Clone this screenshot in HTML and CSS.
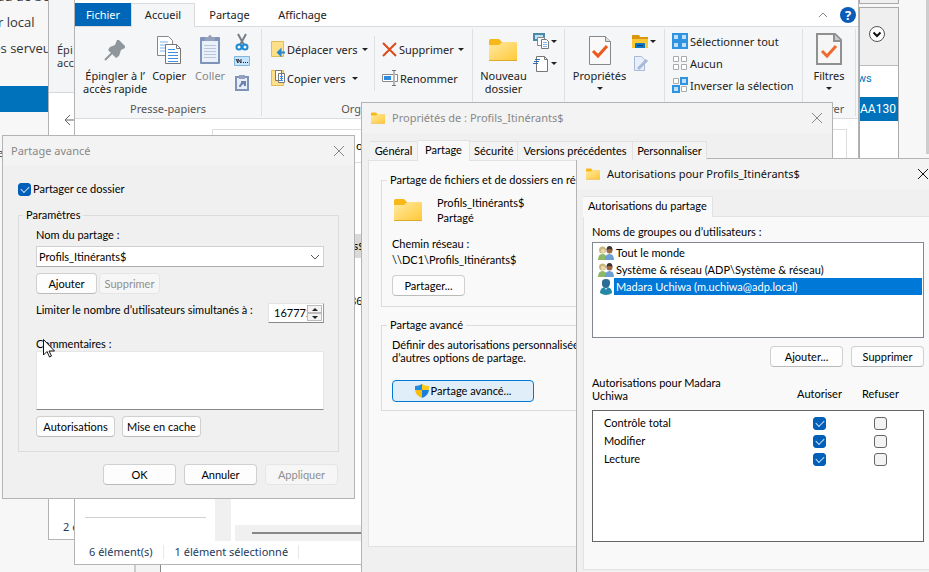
FILE: index.html
```html
<!DOCTYPE html>
<html lang="fr">

<head>
    <meta charset="UTF-8">
    <meta name="viewport" content="width=device-width, initial-scale=1.0">
    <title>Profils_Itinérants$ - Partage avancé</title>
    <link rel="stylesheet" href="styles.css">
</head>

<body>
    <!-- shared icons -->
    <svg class="defs" width="0" height="0">
        <defs>
            <linearGradient id="gold" x1="0" y1="0" x2="1" y2="1">
                <stop offset="0" stop-color="#ffe9a2" />
                <stop offset="1" stop-color="#ffc937" />
            </linearGradient>
            <symbol id="folder" viewBox="0 0 28 22">
                <path d="M0 1.500 Q0 0 1.500 0H10l3 3H27v5H0z" fill="#f9b81a" />
                <path d="M0 6h10l3-3h14q1 0 1 1v17q0 1-1 1H1q-1 0-1-1z" fill="url(#gold)" />
                <path d="M0 21.500h28" stroke="#e0a92c" />
            </symbol>
            <symbol id="close" viewBox="0 0 12 12">
                <path d="M1 1l10 10M11 1L1 11" fill="none" stroke="currentColor" />
            </symbol>
            <symbol id="group" viewBox="0 0 16 14">
                <path d="M0 14q0-6 4.500-6T9 14z" fill="#8db868" />
                <circle cx="4.500" cy="4" r="3.500" fill="#c9b877" />
                <circle cx="5" cy="5" r="2" fill="#efd9b5" />
                <path d="M7 14q0-6 4.500-6T16 14z" fill="#6c9fd6" />
                <circle cx="11.500" cy="4.500" r="3" fill="#9c6b43" />
                <path d="M8.500 4q0-4 3-4t3 4q-3-2-6 0z" fill="#3d3531" />
            </symbol>
            <symbol id="user" viewBox="0 0 14 16">
                <path d="M1 14q0-6 6-6t6 6q-6 4-12 0z" fill="#2587a8" />
                <path d="M5 8l2 3 2-3z" fill="#bfe0ea" />
                <path d="M3 3q0-3 4-3t4 3v2q-1 4-4 4T3 6z" fill="#2c6c95" />
            </symbol>
        </defs>
    </svg>

    <div class="desktop">

        <!-- server manager, mostly covered -->
        <aside class="manager">
            <p>eau de bord</p>
            <p>ur local</p>
            <p>les serveurs</p>
            <p class="active"></p>
            <p class="role">e</p>
        </aside>
        <div class="rail">
            <div class="rail-top"></div>
            <div class="rail-box">
                <div class="rail-head">
                    <svg width="16" height="16" viewBox="0 0 16 16">
                        <circle cx="8" cy="8" r="7.500" fill="#fff" stroke="#555" />
                        <path d="M4.500 6.500L8 10l3.500-3.500" fill="none" stroke="#111" stroke-width="2" />
                    </svg>
                </div>
                <p class="rail-task">ews</p>
                <p class="rail-server">AA130 (1)</p>
            </div>
        </div>
        <div class="scroll"></div>
        <div class="lower"></div>
        <div class="lower front"></div>

        <!-- explorer behind -->
        <div class="window explorer-back">
            <div class="back-ribbon">
                <p>Épi<br>accè</p>
            </div>
            <svg class="back-arrow" width="14" height="12" viewBox="0 0 14 12">
                <path d="M14 6H1M6 1L1 6l5 5" fill="none" stroke="#666" />
            </svg>
            <p class="back-status">2 é</p>
        </div>

        <!-- explorer -->
        <div class="window explorer">
            <div class="menu">
                <button class="file">Fichier</button>
                <button class="current">Accueil</button>
                <button>Partage</button>
                <button>Affichage</button>
                <span class="menu-end">
                    <svg width="10" height="6" viewBox="0 0 10 6">
                        <path d="M1 5l4-4 4 4" fill="none" stroke="#888" />
                    </svg>
                    <span class="help">?</span>
                </span>
            </div>
            <div class="ribbon">
                <div class="group clipboard">
                    <div class="tools">
                        <button class="big pin">
                            <svg width="22" height="32" viewBox="0 0 22 32">
                                <path d="M13 7h2l6 6v2l-4 2-2 6-3 2-8-8 2-3 5-2z" fill="#8f979d" />
                                <path d="M8 20L1 27" stroke="#8f979d" stroke-width="2" />
                            </svg>
                            Épingler à l’<br>accès rapide
                        </button>
                        <button class="big copy">
                            <svg width="26" height="32" viewBox="0 0 26 32">
                                <path d="M1.500 3.500h11l4 4v15h-15z" fill="#fff" stroke="#888" />
                                <path d="M4 9h8M4 12h9M4 15h9M4 18h9" stroke="#7fb2ea" />
                                <path d="M9.500 11.500h11l4 4v15h-15z" fill="#fff" stroke="#777" />
                                <path d="M20.500 11.500v4h4" fill="none" stroke="#777" />
                                <path d="M12 16.500h7M12 19.500h10M12 22.500h10M12 25.500h10M12 28.500h10" stroke="#3d8fe8" />
                            </svg>
                            Copier
                        </button>
                        <button class="big paste" disabled>
                            <svg width="22" height="32" viewBox="0 0 22 32">
                                <rect x="1" y="4" width="20" height="27" rx="1" fill="#8093b8" />
                                <path d="M3 8h16v21H3z" fill="#eaf0f9" />
                                <path d="M5 12.500h12M5 15.500h12M5 18.500h12M5 21.500h12M5 24.500h12" stroke="#b8c5dc" />
                                <path d="M6 8V4h3q2-4 4 0h3v4z" fill="#94a2bb" />
                            </svg>
                            Coller
                        </button>
                        <div class="minis">
                            <svg width="14" height="18" viewBox="0 0 14 18">
                                <path d="M3 1l6 11M11 1L5 12" stroke="#777e86" stroke-width="2" />
                                <circle cx="4" cy="14" r="2.500" fill="none" stroke="#1c8ad6" stroke-width="2" />
                                <circle cx="10" cy="14" r="2.500" fill="none" stroke="#1c8ad6" stroke-width="2" />
                            </svg>
                            <svg width="16" height="10" viewBox="0 0 16 10">
                                <path d="M.5.5h15v9H.5z" fill="#c7e4fa" stroke="#7fb6e0" />
                                <path d="M2 3l2 4V3l3 4V3M9 6.500h1M11 6.500h1M13 6.500h1" fill="none" stroke="#223" />
                            </svg>
                            <svg width="14" height="16" viewBox="0 0 14 16">
                                <rect x="1" y="2" width="12" height="13" fill="#e8eef8" stroke="#8093b8" stroke-width="2" />
                                <path d="M4 0h6v4H4z" fill="#94a2bb" />
                                <path d="M5 12q0-3 4-4M6 7h4v4" fill="none" stroke="#6f84ad" stroke-width="2" />
                            </svg>
                        </div>
                    </div>
                    <h2>Presse-papiers</h2>
                </div>

                <div class="group organise">
                    <div class="tools">
                        <div class="list">
                            <button>
                                <svg width="14" height="16" viewBox="0 0 14 16">
                                    <path d="M.5.5h12v15H.5z" fill="#ffe08a" stroke="#e3bc55" />
                                    <path d="M14 11.500H8M9.500 9L7 11.500 9.500 14z" fill="#2488d8" stroke="#2488d8" stroke-width="2" />
                                </svg>
                                Déplacer vers <i class="caret"></i>
                            </button>
                            <button>
                                <svg width="14" height="16" viewBox="0 0 14 16">
                                    <path d="M.5.5h12v15H.5z" fill="#ffe08a" stroke="#e3bc55" />
                                    <path d="M4.500.5h6v10h-6zM7.500 3.500h6v9h-6z" fill="#fff" stroke="#777" />
                                    <path d="M9 6.500h3M9 8.500h3M9 10.500h3" stroke="#3d8fe8" />
                                </svg>
                                Copier vers <i class="caret wide"></i>
                            </button>
                        </div>
                        <div class="list second">
                            <button>
                                <svg width="15" height="16" viewBox="0 0 15 16">
                                    <path d="M1 2l13 13M14 2L1 15" stroke="#dc4a1c" stroke-width="2" />
                                </svg>
                                Supprimer <i class="caret"></i>
                            </button>
                            <button>
                                <svg width="16" height="16" viewBox="0 0 16 16">
                                    <path d="M11 4.500H.5v7H11M13 4.500h2.500v7H13" fill="#fff" stroke="#888" />
                                    <path d="M2 6h7v4H2z" fill="#2d8ce0" />
                                    <path d="M12 1v14M10 .5h4M10 15.500h4" stroke="#777" />
                                </svg>
                                Renommer
                            </button>
                        </div>
                    </div>
                    <h2>Organiser</h2>
                </div>

                <div class="group new">
                    <div class="tools">
                        <button class="big">
                            <svg width="28" height="32" viewBox="0 0 28 32">
                                <use href="#folder" x="0" y="6" width="28" height="22" />
                            </svg>
                            Nouveau<br>dossier
                        </button>
                        <div class="minis">
                            <span class="mini">
                                <svg width="17" height="17" viewBox="0 0 17 17">
                                    <path d="M1 1h10v6H1z" fill="#bfe3f5" stroke="#4a8aa8" stroke-width="2" />
                                    <path d="M4.500 4.500h7v8h-7z" fill="#fff" stroke="#888" />
                                    <path d="M8.500 6.500h5l2 2v7h-7z" fill="#fff" stroke="#777" />
                                    <path d="M10 9.500h4M10 11.500h4M10 13.500h4" stroke="#8fb7e8" />
                                </svg>
                                <i class="caret"></i>
                            </span>
                            <span class="mini">
                                <svg width="17" height="17" viewBox="0 0 17 17">
                                    <path d="M3.500 1.500h8l3 3v12h-11z" fill="#fff" stroke="#777" />
                                    <path d="M11.500 1.500v3h3" fill="none" stroke="#777" />
                                    <path d="M2 4.500h5M1 6.500h5M0 8.500h5" stroke="#2d6db5" />
                                </svg>
                                <i class="caret"></i>
                            </span>
                        </div>
                    </div>
                </div>

                <div class="group open">
                    <div class="tools">
                        <button class="big">
                            <svg width="22" height="32" viewBox="0 0 22 32">
                                <path d="M.5 3.500h16l5 5v23H.5z" fill="#f9f9f9" stroke="#888" />
                                <path d="M16.500 3.500v5h5" fill="#ddd" stroke="#888" />
                                <path d="M4 18l5 5 9-10" fill="none" stroke="#f0581b" stroke-width="3" />
                            </svg>
                            Propriétés
                            <i class="caret"></i>
                        </button>
                        <div class="minis">
                            <span class="mini">
                                <svg width="17" height="17" viewBox="0 0 17 17">
                                    <path d="M0 2h7l1 2h8v11H0z" fill="#fcc935" />
                                    <path d="M0 2h7l1 2h8v2H0z" fill="#d9970f" />
                                    <path d="M3 11q0-1 1-1h8q1 0 1 1v4H3z" fill="#0b76c4" />
                                    <path d="M5 12.500h6" stroke="#063f70" />
                                </svg>
                                <i class="caret"></i>
                            </span>
                            <span class="mini">
                                <svg width="17" height="17" viewBox="0 0 17 17">
                                    <path d="M2.500 1.500h7l3 3v11h-10z" fill="#e9effa" stroke="#a9b9d8" />
                                    <path d="M15 5L6 14" stroke="#a9b9d8" stroke-width="3" />
                                </svg>
                            </span>
                        </div>
                    </div>
                </div>

                <div class="group select">
                    <div class="tools">
                        <div class="list tight">
                            <button>
                                <svg width="16" height="16" viewBox="0 0 16 16">
                                    <path d="M1 1h6v6H1zM9 1h6v6H9zM1 9h6v6H1zM9 9h6v6H9z" fill="#bfe0fb" stroke="#2f93e0" stroke-width="2" />
                                </svg>
                                Sélectionner tout
                            </button>
                            <button>
                                <svg width="16" height="16" viewBox="0 0 16 16">
                                    <path d="M1.500 1.500h5v5h-5zM9.500 1.500h5v5h-5zM1.500 9.500h5v5h-5zM9.500 9.500h5v5h-5z" fill="#fff" stroke="#aaa" />
                                </svg>
                                Aucun
                            </button>
                            <button>
                                <svg width="16" height="16" viewBox="0 0 16 16">
                                    <path d="M1.500 1.500h5v5h-5zM9.500 9.500h5v5h-5z" fill="#fff" stroke="#aaa" />
                                    <path d="M9 1h6v6H9zM1 9h6v6H1z" fill="#bfe0fb" stroke="#2f93e0" stroke-width="2" />
                                </svg>
                                Inverser la sélection
                            </button>
                        </div>
                    </div>
                </div>

                <div class="group filter">
                    <div class="tools">
                        <button class="big">
                            <svg width="26" height="32" viewBox="0 0 26 32">
                                <path d="M1 1h18l6 6v24H1z" fill="#f6f6f6" stroke="#909090" stroke-width="2" />
                                <path d="M18 1v7h7" fill="#ccc" stroke="#909090" stroke-width="2" />
                                <path d="M6 18l5 5 9-10" fill="none" stroke="#ee6a30" stroke-width="3" />
                            </svg>
                            Filtres
                            <i class="caret"></i>
                        </button>
                    </div>
                    <h2>Filtrer</h2>
                </div>
            </div>

            <div class="search">o</div>
            <div class="explorer-body">
                <div class="tree"></div>
                <div class="files">
                    <p class="row picked">Profils_Itinérants$</p>
                    <p class="row date">86</p>
                    <div class="hscroll"></div>
                </div>
            </div>
            <div class="status">
                <span>6 élément(s)</span>
                <span>1 élément sélectionné</span>
            </div>
        </div>

        <!-- folder properties -->
        <div class="window properties">
            <div class="titlebar">
                <svg width="14" height="12"><use href="#folder" width="14" height="12" /></svg>
                <h1>Propriétés de : Profils_Itinérants$</h1>
                <button class="x" aria-label="Fermer"><svg width="12" height="12"><use href="#close" /></svg></button>
            </div>
            <div class="tabs">
                <button>Général</button>
                <button class="current">Partage</button>
                <button>Sécurité</button>
                <button>Versions précédentes</button>
                <button>Personnaliser</button>
            </div>
            <div class="panel">
                <fieldset class="share">
                    <legend>Partage de fichiers et de dossiers en réseau</legend>
                    <div class="shared">
                        <svg width="28" height="22"><use href="#folder" /></svg>
                        <p>Profils_Itinérants$<br>Partagé</p>
                    </div>
                    <p class="path">Chemin réseau :<br>\\DC1\Profils_Itinérants$</p>
                    <button class="btn">Partager...</button>
                </fieldset>
                <fieldset class="advanced">
                    <legend>Partage avancé</legend>
                    <p>Définir des autorisations personnalisées<br>d’autres options de partage.</p>
                    <button class="btn focus">
                        <svg width="14" height="14" viewBox="0 0 14 14">
                            <path d="M7 0Q4 2 0 2v4h7z" fill="#1f8be0" />
                            <path d="M7 0q3 2 7 2v4H7z" fill="#fccb1d" />
                            <path d="M0 6h7v8Q1 12 0 6z" fill="#f9bd12" />
                            <path d="M14 6H7v8q6-2 7-8z" fill="#1a7fd6" />
                        </svg>
                        Partage avancé...
                    </button>
                </fieldset>
            </div>
        </div>

        <!-- advanced sharing -->
        <div class="window sharing">
            <div class="titlebar">
                <h1>Partage avancé</h1>
                <button class="x" aria-label="Fermer"><svg width="12" height="12"><use href="#close" /></svg></button>
            </div>
            <form class="sharing-body">
                <label class="check"><input type="checkbox" checked>Partager ce dossier</label>
                <fieldset>
                    <legend>Paramètres</legend>
                    <label for="name">Nom du partage :</label>
                    <div class="select-box">
                        <select id="name">
                            <option>Profils_Itinérants$</option>
                        </select>
                        <svg width="10" height="6" viewBox="0 0 10 6">
                            <path d="M1 1l4 4 4-4" fill="none" stroke="#555" />
                        </svg>
                    </div>
                    <div class="buttons">
                        <button type="button" class="btn">Ajouter</button>
                        <button type="button" class="btn" disabled>Supprimer</button>
                    </div>
                    <div class="limit">
                        <label for="limit">Limiter le nombre d’utilisateurs simultanés à :</label>
                        <span class="spinner">
                            <input id="limit" type="text" value="16777216">
                            <span class="arrows">
                                <button type="button" aria-label="Plus"><i class="caret up"></i></button>
                                <button type="button" aria-label="Moins"><i class="caret"></i></button>
                            </span>
                        </span>
                    </div>
                    <label for="comment">Commentaires :</label>
                    <textarea id="comment"></textarea>
                    <div class="buttons bottom">
                        <button type="button" class="btn">Autorisations</button>
                        <button type="button" class="btn">Mise en cache</button>
                    </div>
                </fieldset>
                <div class="footer">
                    <button type="button" class="btn">OK</button>
                    <button type="button" class="btn">Annuler</button>
                    <button type="button" class="btn" disabled>Appliquer</button>
                </div>
            </form>
        </div>

        <!-- share permissions -->
        <div class="window permissions">
            <div class="titlebar">
                <svg width="14" height="12"><use href="#folder" width="14" height="12" /></svg>
                <h1>Autorisations pour Profils_Itinérants$</h1>
                <button class="x" aria-label="Fermer"><svg width="12" height="12"><use href="#close" /></svg></button>
            </div>
            <div class="tabs">
                <button class="current">Autorisations du partage</button>
            </div>
            <div class="panel">
                <p>Noms de groupes ou d’utilisateurs :</p>
                <ul class="names">
                    <li><svg width="16" height="14"><use href="#group" /></svg><span>Tout le monde</span></li>
                    <li><svg width="16" height="14"><use href="#group" /></svg><span>Système &amp; réseau (ADP\Système &amp; réseau)</span></li>
                    <li class="selected"><svg width="16" height="16"><use href="#user" /></svg><span>Madara Uchiwa (m.uchiwa@adp.local)</span></li>
                </ul>
                <div class="buttons">
                    <button class="btn">Ajouter...</button>
                    <button class="btn">Supprimer</button>
                </div>
                <table>
                    <thead>
                        <tr>
                            <th class="who">Autorisations pour Madara<br>Uchiwa</th>
                            <th>Autoriser</th>
                            <th>Refuser</th>
                            <th class="edge"></th>
                        </tr>
                    </thead>
                    <tbody>
                        <tr class="gap">
                            <td colspan="4"></td>
                        </tr>
                        <tr>
                            <td>Contrôle total</td>
                            <td><input type="checkbox" aria-label="Autoriser contrôle total" checked></td>
                            <td><input type="checkbox" aria-label="Refuser contrôle total"></td>
                            <td></td>
                        </tr>
                        <tr>
                            <td>Modifier</td>
                            <td><input type="checkbox" aria-label="Autoriser modifier" checked></td>
                            <td><input type="checkbox" aria-label="Refuser modifier"></td>
                            <td></td>
                        </tr>
                        <tr>
                            <td>Lecture</td>
                            <td><input type="checkbox" aria-label="Autoriser lecture" checked></td>
                            <td><input type="checkbox" aria-label="Refuser lecture"></td>
                            <td></td>
                        </tr>
                        <tr class="rest">
                            <td colspan="4"></td>
                        </tr>
                    </tbody>
                </table>
            </div>
        </div>

        <svg class="cursor" width="12" height="19" viewBox="0 0 12 19">
            <path d="M.5.5v15.500l3.500-3.500 2.500 5.500 2-1-2.500-5h5.500z" fill="#fff" stroke="#111" />
        </svg>
    </div>
</body>

</html>
```

FILE: styles.css
```css
* {
    margin: 0;
    padding: 0;
    box-sizing: border-box;
}

body {
    font-family: Lato, "Liberation Sans", sans-serif;
    font-size: 11px;
    line-height: 14px;
    color: #000;
}

button, input, select, textarea {
    font: inherit;
    color: inherit;
}

h1, h2 {
    font-weight: normal;
}

svg {
    flex: none;
}

.defs {
    position: absolute;
}

.desktop {
    position: relative;
    min-height: 100vh;
    overflow: hidden;
    background-color: #f7f7f7;
    white-space: nowrap;
}

.window {
    position: absolute;
    display: flex;
    flex-direction: column;
    border: 1px solid #b4b4b4;
    background-color: #f0f0f0;
}

/* server manager */

.manager {
    position: absolute;
    top: -17px;
    left: -10px;
    width: 60px;
    overflow: hidden;
    font-family: "Open Sans", sans-serif;
    font-size: 13px;
    line-height: 26px;
    color: #333;
}

.manager p {
    height: 26px;
}

.manager .active {
    margin-top: 25px;
    background-color: #0072bc;
}

.manager .role {
    margin-top: 28px;
    padding-left: 7px;
    font-size: 11px;
}

.rail {
    position: absolute;
    top: 0;
    left: 859px;
    width: 40px;
    font-family: Roboto, sans-serif;
}

.rail-top {
    height: 4px;
    border: 1px solid #aaa;
    border-top: 0;
    background-color: #efefef;
}

.rail-box {
    height: 180px;
    margin-top: 3px;
    overflow: hidden;
    border: 1px solid #aaa;
    background-color: #fff;
}

.rail-head {
    height: 58px;
    padding: 18px 9px;
    border-bottom: 1px solid #bbb;
    background-color: #efefef;
}

.rail-task {
    padding-top: 6px;
    margin-left: -8px;
    color: #0072bc;
}

.rail-server {
    height: 24px;
    margin-top: 11px;
    font-size: 12px;
    line-height: 24px;
    color: #fff;
    background-color: #0072bc;
}

.scroll {
    position: absolute;
    top: 0;
    right: 0;
    width: 3px;
    height: 154px;
    background-color: #cdcdcd;
}

.lower {
    position: absolute;
    top: 560px;
    right: 0;
    bottom: 0;
    left: 134px;
    border-left: 2px solid #ccc;
    background-color: #f3f3f3;
}

.lower.front {
    left: 160px;
    border-left: 1px solid #888;
    background-color: #fff;
}

/* explorer windows */

.explorer-back {
    top: -1px;
    left: 48px;
    width: 60px;
    height: 541px;
    background-color: #fff;
    font-family: "Noto Sans", sans-serif;
    color: #333;
}

.back-ribbon {
    height: 93px;
    padding: 43px 8px 0;
    overflow: hidden;
    line-height: 13px;
    border-bottom: 1px solid #d8d8d8;
    background-color: #f4f5f7;
}

.back-arrow {
    margin: 21px 0 0 15px;
}

.back-status {
    margin: auto 0 5px 14px;
    color: #1e395b;
}

.explorer {
    top: -1px;
    left: 74px;
    width: 785px;
    height: 566px;
    background-color: #fff;
    font-family: "Noto Sans", sans-serif;
}

.explorer button {
    border: 0;
    background: none;
}

.menu {
    display: flex;
    height: 27px;
    padding-top: 3px;
    border-bottom: 1px solid #dadbdc;
    color: #222;
}

.menu button {
    width: 69px;
}

.menu .file {
    width: 56px;
    color: #fff;
    background-color: #0067b8;
}

.menu .current {
    position: relative;
    width: 64px;
    height: 24px;
    padding-bottom: 2px;
    border: 1px solid #dadbdc;
    border-bottom: 0;
    background-color: #f5f6f7;
}

.menu button:nth-child(4) {
    width: 77px;
}

.menu-end {
    display: flex;
    gap: 12px;
    align-items: center;
    margin-left: auto;
    padding-right: 2px;
}

.help {
    width: 16px;
    height: 16px;
    border-radius: 50%;
    font-size: 13px;
    font-weight: bold;
    line-height: 16px;
    text-align: center;
    color: #fff;
    background-color: #0a5cb8;
}

.ribbon {
    display: flex;
    flex: none;
    height: 92px;
    border-bottom: 1px solid #dadbdc;
    background-color: #f5f6f7;
    line-height: 13px;
    color: #222;
}

.group {
    display: flex;
    flex-direction: column;
    margin: 2px 0;
    border-right: 1px solid #dfe0e2;
}

.group h2 {
    margin-top: auto;
    font-size: 11px;
    line-height: 14px;
    text-align: center;
    color: #555;
}

.tools {
    display: flex;
    justify-content: center;
    padding-top: 4px;
}

.big {
    display: flex;
    flex-direction: column;
    align-items: center;
    line-height: 13px;
    text-align: center;
}

.big svg {
    margin-bottom: 4px;
}

.big .caret {
    margin-top: 5px;
}

.explorer .paste {
    margin-left: 4px;
    color: #888;
}

.caret {
    display: inline-block;
    border: 3px solid transparent;
    border-top-color: #222;
    border-bottom: 0;
}

.caret.up {
    border-top: 0;
    border-bottom: 3px solid #222;
}

.minis {
    display: flex;
    flex-direction: column;
    gap: 5px;
    align-items: center;
}

.mini {
    display: flex;
    gap: 1px;
    align-items: center;
    width: 24px;
}

.clipboard {
    width: 187px;
}

.clipboard .tools {
    gap: 5px;
    justify-content: flex-start;
    padding-left: 8px;
}

.clipboard .minis {
    margin-left: 4px;
}

.clipboard .minis svg:nth-child(3) {
    margin-top: 4px;
}

.organise {
    width: 211px;
}

.organise .tools {
    justify-content: flex-start;
    padding-top: 7px;
}

.list {
    display: flex;
    flex-direction: column;
    gap: 11px;
    padding: 4px 9px;
}

.list button {
    display: flex;
    gap: 2px;
    align-items: center;
    height: 18px;
}

.list .caret {
    margin-left: 2px;
}

.list .wide {
    margin-left: 5px;
}

.list:first-child {
    width: 112px;
}

.second {
    padding-left: 7px;
    border-left: 1px solid #dfe0e2;
}

.new {
    width: 92px;
}

.new .tools, .open .tools {
    gap: 6px;
}

.open {
    width: 100px;
}

.select {
    width: 138px;
}

.select .tools {
    justify-content: flex-start;
    padding-top: 3px;
}

.list.tight {
    gap: 4px;
    width: 137px;
    padding: 0 7px;
}

.filter {
    width: 53px;
}

.search {
    flex: none;
    height: 34px;
    margin: 10px 11px 0 137px;
    padding-left: 143px;
    border: 1px solid #ddd;
    line-height: 32px;
}

.explorer-body {
    display: flex;
    flex: 1;
    min-height: 0;
}

.tree {
    width: 121px;
    margin: 0 0 23px 10px;
    border-bottom: 1px solid #d0d0d0;
}

.files {
    display: flex;
    flex: 1;
    flex-direction: column;
    margin-left: 9px;
    border-left: 16px solid #f0f0f0;
    padding-left: 4px;
}

.row {
    height: 24px;
    padding-left: 36px;
    line-height: 24px;
    margin-top: 31px;
}

.row.picked {
    margin-top: 71px;
    background-color: #d9d9d9;
}

.date {
    padding-left: 115px;
}

.hscroll {
    height: 16px;
    margin-top: auto;
    background: linear-gradient(#888, #888) 17px 7px / 100% 2px no-repeat #f0f0f0;
}

.status {
    display: flex;
    flex: none;
    height: 23px;
    padding-left: 14px;
    color: #1e395b;
}

.status span {
    height: 14px;
    margin: 4px 0;
    padding-right: 10px;
    margin-right: 11px;
    border-right: 1px solid #e8e8e8;
    line-height: 14px;
}

/* dialogs */

.titlebar {
    display: flex;
    flex: none;
    gap: 7px;
    align-items: center;
    height: 30px;
    padding: 0 9px;
    background-color: #f3f3f3;
    font-family: "Noto Sans", sans-serif;
    color: #888;
}

.titlebar h1 {
    font-size: 11px;
}

.x {
    margin-left: auto;
    border: 0;
    background: none;
    line-height: 0;
}

.btn {
    min-width: 73px;
    height: 21px;
    border: 1px solid #d0d0d0;
    border-bottom-color: #bbb;
    border-radius: 4px;
    background-color: #fdfdfd;
}

.btn:disabled {
    border-color: #e5e5e5;
    color: #8f8f8f;
    background-color: #f6f6f6;
}

.buttons {
    display: flex;
    gap: 8px;
}

fieldset {
    min-width: 0;
    border: 1px solid #dcdcdc;
}

legend {
    padding: 0 3px;
}

input[type="checkbox"] {
    appearance: none;
    position: relative;
    width: 13px;
    height: 13px;
    border: 1px solid #666;
    border-radius: 3px;
    background-color: #f3f3f3;
    vertical-align: middle;
}

input[type="checkbox"]:checked {
    border-color: #005fb8;
    background-color: #005fb8;
}

input[type="checkbox"]:checked::after {
    content: "";
    position: absolute;
    top: 2px;
    left: 2px;
    width: 7px;
    height: 4px;
    border: solid #cfe2f5;
    border-width: 0 0 1px 1px;
    transform: rotate(-45deg);
}

.tabs {
    position: relative;
    z-index: 1;
    display: flex;
    flex: none;
    align-items: flex-end;
    height: 28px;
    margin: 0 6px -1px;
}

.tabs button {
    height: 19px;
    padding: 0 4px;
    border: 1px solid #e2e2e2;
    border-left: 0;
    border-bottom: 0;
    margin-bottom: 1px;
    background-color: #f3f3f3;
}

.tabs .current {
    height: 21px;
    padding: 0 5px 3px;
    margin-bottom: 0;
    background-color: #f9f9f9;
}

.panel {
    display: flex;
    flex-direction: column;
    margin: 0 6px;
    border: 1px solid #e2e2e2;
    background-color: #f9f9f9;
}

/* folder properties */

.properties {
    top: 102px;
    left: 361px;
    width: 472px;
    height: 484px;
}

.properties .tabs {
    padding-left: 2px;
}

.properties .tabs button {
    flex: none;
    width: 48px;
}

.properties .tabs .current {
    width: 52px;
}

.properties .tabs button:nth-child(4) {
    width: 115px;
}

.properties .tabs button:nth-child(5) {
    width: 74px;
}

.properties .panel {
    height: 387px;
    padding: 12px;
}

.properties fieldset {
    padding: 0 10px;
}

.properties legend {
    margin-left: -5px;
}

.share {
    height: 134px;
}

.shared {
    display: flex;
    gap: 15px;
    align-items: center;
    padding: 8px 0 0 2px;
    line-height: 15px;
}

.path {
    margin: 11px 0 7px;
    line-height: 16px;
}

.advanced {
    height: 93px;
    margin-top: 11px;
}

.advanced p {
    padding-top: 6px;
    line-height: 13px;
}

.btn.focus {
    display: flex;
    gap: 2px;
    align-items: center;
    justify-content: center;
    width: 142px;
    height: 22px;
    margin-top: 16px;
    border-color: #0078d4;
    background-color: #e0eef9;
}

/* advanced sharing */

.sharing {
    top: 135px;
    left: 2px;
    width: 353px;
    height: 364px;
}

.sharing .titlebar {
    padding-left: 8px;
}

.sharing-body {
    padding: 16px 15px 0;
}

.sharing label {
    display: block;
}

.sharing .check {
    display: flex;
    gap: 2px;
    align-items: center;
}

.sharing fieldset {
    height: 244px;
    margin-top: 12px;
    padding: 6px 14px 0 17px;
}

.sharing legend {
    margin-left: -13px;
}

.select-box {
    position: relative;
    margin-top: 4px;
}

.select-box svg {
    position: absolute;
    top: 8px;
    right: 4px;
    pointer-events: none;
}

select {
    appearance: none;
    display: block;
    width: 100%;
    height: 21px;
    padding: 0 2px;
    border: 1px solid #d0d0d0;
    border-bottom-color: #aaa;
    background-color: #fff;
}

.sharing .buttons {
    gap: 2px;
    margin-top: 6px;
}

.sharing .buttons .btn {
    min-width: 61px;
}

.limit {
    display: flex;
    justify-content: space-between;
    margin: 9px 0 14px;
}

.spinner {
    display: flex;
    width: 56px;
    height: 20px;
    padding: 1px;
    border: 1px solid #e4e4e4;
    border-right-color: #999;
    border-bottom-color: #888;
    background-color: #fff;
}

.spinner input {
    flex: 1;
    width: 0;
    padding-left: 4px;
    border: 0;
    outline: 0;
    background: none;
}

.arrows {
    display: flex;
    flex-direction: column;
    width: 15px;
}

.arrows button {
    display: flex;
    flex: 1;
    align-items: center;
    justify-content: center;
    border: 1px solid #bbb;
    background-color: #f3f3f3;
}

textarea {
    display: block;
    width: 100%;
    height: 59px;
    border: 1px solid #e6e6e6;
    border-bottom-color: #888;
    resize: none;
}

.sharing .bottom {
    gap: 7px;
}

.sharing .bottom .btn {
    width: 79px;
}

.footer {
    display: flex;
    gap: 8px;
    justify-content: flex-end;
    margin-top: 12px;
    padding-right: 1px;
}

/* permissions */

.permissions {
    top: 158px;
    left: 576px;
    width: 363px;
    height: 430px;
}

.permissions .titlebar {
    color: #111;
}

.permissions .panel {
    height: 354px;
    padding: 8px 7px 0 8px;
}

.names {
    height: 96px;
    margin-top: 3px;
    padding: 1px;
    border: 1px solid #828790;
    background-color: #fff;
    list-style: none;
}

.names li {
    display: flex;
    align-items: center;
    height: 17px;
    padding-left: 4px;
}

.names span {
    flex: 1;
    padding-left: 2px;
    line-height: 17px;
}

.selected span {
    color: #fff;
    background-color: #0078d7;
}

.permissions .buttons {
    justify-content: flex-end;
    margin: 8px 0 9px;
}

table {
    width: 100%;
    border-spacing: 0;
    table-layout: fixed;
}

th {
    width: 61px;
    height: 35px;
    font-weight: normal;
    line-height: 13px;
    vertical-align: middle;
}

.who {
    width: auto;
    text-align: left;
    vertical-align: top;
}

th, td {
    text-align: center;
}

th.who {
    text-align: left;
}

th.edge {
    width: 13px;
}

thead th {
    border-bottom: 1px solid #646464;
}

td {
    height: 18px;
    line-height: 14px;
    background-color: #fff;
}

td:first-child {
    padding-left: 11px;
    border-left: 1px solid #646464;
    text-align: left;
}

td:last-child {
    border-right: 1px solid #646464;
}

.gap td {
    height: 3px;
}

.rest td {
    height: 74px;
    border-bottom: 1px solid #646464;
}

.cursor {
    position: absolute;
    top: 339px;
    left: 43px;
}
```
